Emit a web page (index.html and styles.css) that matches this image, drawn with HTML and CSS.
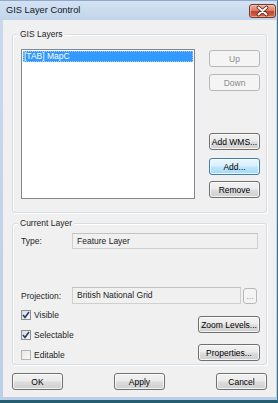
FILE: index.html
```html
<!DOCTYPE html>
<html lang="en">
<head>
    <meta charset="UTF-8">
    <title>GIS Layer Control</title>
    <link rel="stylesheet" href="styles.css">
</head>
<body>
<div class="window">
    <div class="titlebar">
        <span class="title">GIS Layer Control</span>
        <button class="close">
            <svg width="25" height="12" viewBox="0 0 25 12">
                <path d="M8.5 2.5 L16.5 9.5 M16.5 2.5 L8.5 9.5" stroke="#5a2015" stroke-width="3.6" stroke-linecap="round"/>
                <path d="M8.5 2.5 L16.5 9.5 M16.5 2.5 L8.5 9.5" stroke="#fff" stroke-width="2" stroke-linecap="round"/>
            </svg>
        </button>
    </div>

    <div class="client">
        <!-- GIS layers list -->
        <div class="group layers">
            <div class="group-title">GIS Layers</div>
            <div class="layers-body">
                <div class="listbox">
                    <div class="item selected">[TAB] MapC</div>
                </div>
                <div class="side-buttons">
                    <button class="btn" disabled>Up</button>
                    <button class="btn down" disabled>Down</button>
                    <div class="spacer"></div>
                    <button class="btn">Add WMS...</button>
                    <button class="btn default add">Add...</button>
                    <button class="btn remove">Remove</button>
                </div>
            </div>
        </div>

        <!-- Current layer details -->
        <div class="group current">
            <div class="group-title">Current Layer</div>
            <div class="field-row type-row">
                <span class="field-label">Type:</span>
                <div class="field type-field">Feature Layer</div>
            </div>
            <div class="field-row proj-row">
                <span class="field-label">Projection:</span>
                <div class="field proj-field">British National Grid</div>
                <button class="btn dots" disabled>...</button>
            </div>
            <div class="options">
                <div class="checks">
                    <label class="check"><span class="box checked"><svg width="8" height="8" viewBox="0 0 8 8"><path d="M1 4 L3 6.5 L7 1" fill="none" stroke="#1c3b73" stroke-width="1.5"/></svg></span>Visible</label>
                    <label class="check"><span class="box checked"><svg width="8" height="8" viewBox="0 0 8 8"><path d="M1 4 L3 6.5 L7 1" fill="none" stroke="#1c3b73" stroke-width="1.5"/></svg></span>Selectable</label>
                    <label class="check"><span class="box"></span>Editable</label>
                </div>
                <div class="option-buttons">
                    <button class="btn wide">Zoom Levels...</button>
                    <button class="btn wide">Properties...</button>
                </div>
            </div>
        </div>

        <div class="dialog-buttons">
            <button class="btn">OK</button>
            <button class="btn">Apply</button>
            <button class="btn">Cancel</button>
        </div>
    </div>
</div>
</body>
</html>
```

FILE: styles.css
```css
* {
    box-sizing: border-box;
}
body {
    margin: 0;
    font-family: "Liberation Sans", Arial, sans-serif;
    font-size: 8.5px;
    color: #000;
    background: #2a6577;
}
.window {
    width: 278px;
    height: 403px;
    display: flex;
    flex-direction: column;
    background: linear-gradient(#c9daee, #bccfe6);
    border-right: 1px solid #3f7586;
    border-bottom: 3px solid #245e70;
    padding-bottom: 3px;
}
.titlebar {
    height: 20px;
    display: flex;
    align-items: flex-start;
    justify-content: space-between;
    padding: 0 1px 0 6px;
    background: linear-gradient(#d3e2f3, #c2d5ec);
    border-top: 1px solid #8fa9c6;
}
.title {
    font-size: 9.3px;
    line-height: 19px;
    color: #101820;
}
.close {
    appearance: none;
    margin-top: 3px;
    width: 27px;
    height: 14px;
    padding: 0;
    border: 1px solid #7a3326;
    border-radius: 3px;
    background: linear-gradient(#e9b2a3 0%, #d98169 45%, #c4432a 55%, #cf6a4c 100%);
    box-shadow: inset 0 0 0 1px rgba(255, 220, 210, 0.5);
    display: flex;
    align-items: center;
    justify-content: center;
}
.client {
    flex: 1;
    margin: 0 1px 0 3px;
    padding: 14px 9px 0 9px;
    background: #f0f0f0;
    display: flex;
    flex-direction: column;
}
/* Group boxes */
.group {
    border: 1px solid #d5dfe5;
    border-radius: 3px;
    box-shadow: 1px 1px 0 #fff, inset 1px 1px 0 #fff;
}
.group-title {
    display: table;
    height: 12px;
    line-height: 12px;
    margin: -7px 0 0 -3px;
    padding: 0 2px;
    background: #f0f0f0;
    color: #1e1e1e;
}
.layers {
    padding: 0 6px 13px 8px;
}
.layers-body {
    display: flex;
    margin-top: 9px;
}
.listbox {
    width: 174px;
    height: 150px;
    padding: 1px;
    background: #fff;
    border: 1px solid #828790;
}
.item {
    height: 11px;
    line-height: 11px;
    padding-left: 1px;
}
.item.selected {
    background: #3399ff;
    color: #fff;
    outline: 1px dotted #9cc9f5;
    outline-offset: -1px;
}
.side-buttons {
    width: 51px;
    margin-left: 14px;
    padding: 1px 0 1px 0;
    display: flex;
    flex-direction: column;
}
.spacer {
    flex: 1;
}
.down {
    margin-top: 7px;
}
.add {
    margin-top: 8px;
}
.remove {
    margin-top: 6px;
}
/* Buttons */
.btn {
    appearance: none;
    font-family: inherit;
    font-size: 8.5px;
    color: #000;
    height: 17px;
    padding: 0;
    border: 1px solid #707070;
    border-radius: 3px;
    background: linear-gradient(#f2f2f2 0%, #ebebeb 48%, #dddddd 52%, #cfcfcf 100%);
    box-shadow: inset 0 0 0 1px rgba(255, 255, 255, 0.75);
    white-space: nowrap;
}
.btn:disabled {
    color: #8c8c8c;
    border-color: #b5b9bc;
    background: #f4f4f4;
    box-shadow: none;
}
.btn.default {
    border-color: #3c7fb1;
    background: linear-gradient(#eaf6fd 0%, #d9f0fc 48%, #bee6fd 52%, #a7d9f5 100%);
}
/* Current layer */
.current {
    margin-top: 10px;
    padding: 0 8px 3px 8px;
}
.field-row {
    display: flex;
    align-items: center;
}
.type-row {
    margin-top: 4px;
}
.proj-row {
    margin-top: 38px;
}
.field-label {
    width: 51px;
    color: #1e1e1e;
}
.field {
    height: 16px;
    line-height: 14px;
    padding-left: 4px;
    background: #f0f0f0;
    border: 1px solid #cfcfcf;
    border-top-color: #c2c2c2;
    color: #222;
}
.type-field {
    width: 186px;
}
.proj-field {
    width: 169px;
    height: 17px;
    line-height: 15px;
}
.dots {
    width: 14px;
    height: 16px;
    margin-left: 2px;
    line-height: 10px;
}
.options {
    display: flex;
    margin-top: 6px;
}
.checks {
    flex: 1;
    display: flex;
    flex-direction: column;
    gap: 10px;
}
.check {
    display: flex;
    align-items: center;
    height: 10px;
    color: #1e1e1e;
}
.box {
    width: 10px;
    height: 10px;
    margin-right: 3px;
    border: 1px solid #8f8f8f;
    background: linear-gradient(135deg, #dcdcdc, #f7f7f7);
    display: flex;
    align-items: center;
    justify-content: center;
}
.box:not(.checked) {
    border-color: #b4b4b4;
    background: linear-gradient(135deg, #e6e6e6, #f9f9f9);
}
.option-buttons {
    width: 62px;
    margin-right: -2px;
    padding-top: 6px;
    display: flex;
    flex-direction: column;
    gap: 11px;
}
.dialog-buttons {
    margin-top: 8px;
    display: flex;
    justify-content: space-between;
}
.dialog-buttons .btn {
    width: 51px;
}
```
